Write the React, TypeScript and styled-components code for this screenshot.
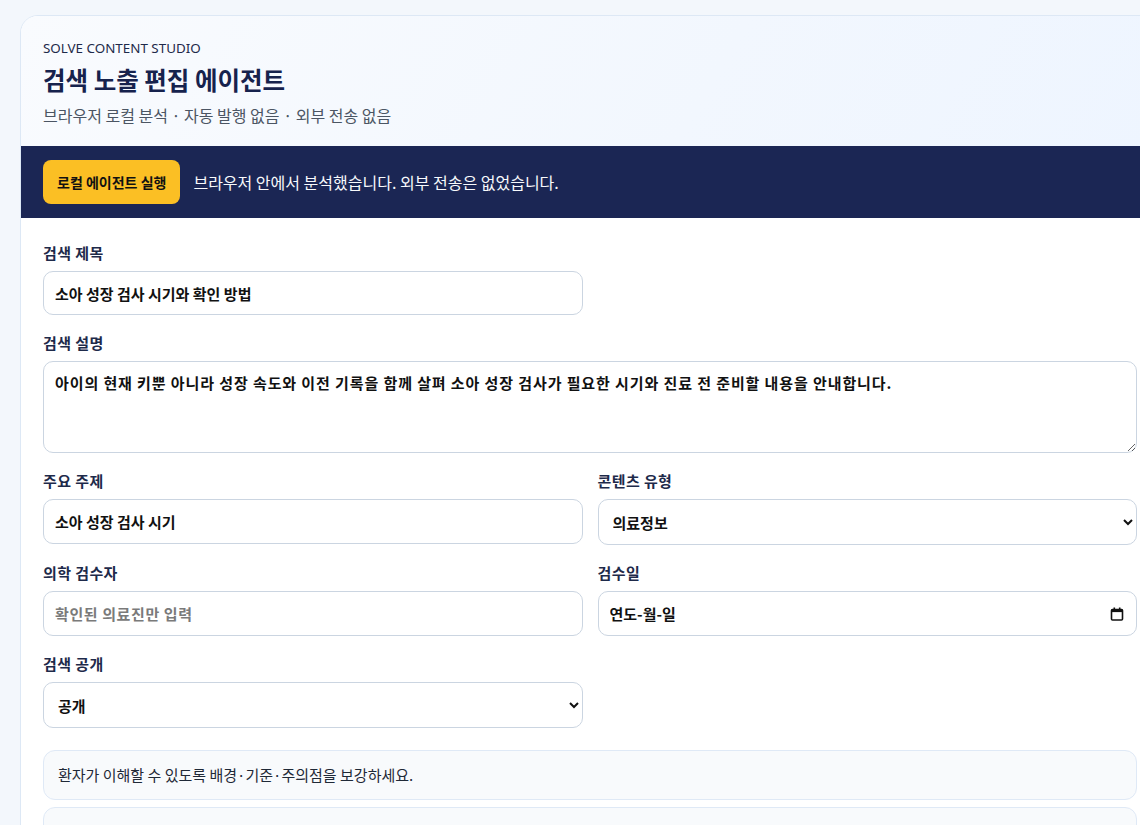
import styled, { createGlobalStyle } from 'styled-components';

const GlobalStyle = createGlobalStyle`
  html, body {
    margin: 0;
    overflow-x: hidden;
    background: #f3f7fc;
  }
  body {
    font-family: "Noto Sans", "Noto Sans CJK KR", sans-serif;
    color: #0f172a;
  }
  * { box-sizing: border-box; }
`;

const Page = styled.div`
  padding: 15px 0 0 20px;
`;

const Card = styled.section`
  width: 1140px;
  background: #ffffff;
  border: 1px solid #dde8f5;
  border-radius: 18px;
  overflow: hidden;
`;

const Header = styled.header`
  padding: 23px 22px 20px;
  background: linear-gradient(120deg, #f9fbfe 0%, #f2f7fe 60%, #eef5ff 100%);
`;

const Eyebrow = styled.div`
  font-size: 13.4px;
  line-height: 18px;
  color: #1e2a4a;
`;

const Title = styled.h1`
  margin: 7px 0 0;
  font-size: 24.5px;
  line-height: 32px;
  font-weight: 700;
  color: #16224d;
  font-family: "Noto Sans CJK KR", "Noto Sans", sans-serif;
`;

const Subtitle = styled.p`
  margin: 8px 0 0;
  font-size: 16px;
  line-height: 22px;
  color: #4b5563;
  font-family: "Noto Sans CJK KR", sans-serif;
`;

const RunBar = styled.div`
  display: flex;
  align-items: center;
  gap: 13px;
  padding: 14px 22px;
  background: #1b2654;
`;

const RunButton = styled.button`
  height: 44px;
  padding: 0 14px;
  border: none;
  border-radius: 8px;
  background: #fbbf24;
  color: #111111;
  font-family: "Noto Sans CJK KR", sans-serif;
  font-size: 14px;
  font-weight: 700;
  cursor: pointer;
`;

const RunMessage = styled.span`
  color: #f8fafc;
  font-size: 16px;
  font-family: "Noto Sans CJK KR", sans-serif;
`;

const Form = styled.div`
  display: flex;
  flex-direction: column;
  gap: 18px;
  padding: 25px 22px 30px;
`;

const Row = styled.div`
  display: grid;
  grid-template-columns: 1fr 1fr;
  column-gap: 15px;
`;

const Field = styled.label`
  display: flex;
  flex-direction: column;
  gap: 8px;
`;

const Label = styled.span`
  font-size: 15px;
  line-height: 20px;
  font-weight: 700;
  letter-spacing: 0.4px;
  color: #1e2a4a;
  font-family: "Noto Sans CJK KR", sans-serif;
`;

const controlBase = `
  width: 100%;
  border: 1px solid #cbd5e1;
  border-radius: 10px;
  background: #ffffff;
  font-family: "Noto Sans CJK KR", sans-serif;
  font-size: 15px;
  font-weight: 700;
  color: #111111;
  outline: none;
`;

const TextInput = styled.input<{ $half?: boolean }>`
  ${controlBase}
  height: ${({ $half }) => ($half ? '45px' : '44px')};
  padding: 0 11px;
  &::placeholder {
    color: #7a7a7a;
    letter-spacing: 0.6px;
  }
`;

const TextArea = styled.textarea`
  ${controlBase}
  height: 92px;
  padding: 10px 11px;
  line-height: 22px;
  letter-spacing: 0.9px;
  resize: vertical;
`;

const Select = styled.select`
  ${controlBase}
  height: 46px;
  padding: 0 10px;
`;

const DateBox = styled.div`
  ${controlBase}
  height: 45px;
  display: flex;
  align-items: center;
  padding: 0 12px 0 11px;
`;

const DateText = styled.input`
  flex: 1;
  border: none;
  outline: none;
  background: transparent;
  font: inherit;
  color: #111111;
  padding: 0;
`;

const NoteStack = styled.div`
  display: flex;
  flex-direction: column;
  gap: 7px;
  margin-top: 4px;
`;

const Note = styled.div<{ $spacious?: boolean }>`
  padding: ${({ $spacious }) => ($spacious ? '32px 14px 16px' : '13px 14px')};
  border: 1px solid #dfe9f6;
  border-radius: 12px;
  background: #f8fafc;
  font-size: 15px;
  line-height: 22px;
  color: #1f2937;
  font-family: "Noto Sans CJK KR", sans-serif;
`;

function CalendarIcon() {
  return (
    <svg width="14" height="14" viewBox="0 0 14 14" fill="none">
      <rect x="1.5" y="2.5" width="11" height="10.5" rx="1" stroke="#111" strokeWidth="1.6" />
      <rect x="1.5" y="2.5" width="11" height="2.6" fill="#111" />
      <rect x="3.5" y="0.5" width="1.6" height="2.5" fill="#111" />
      <rect x="8.9" y="0.5" width="1.6" height="2.5" fill="#111" />
    </svg>
  );
}

export default function App() {
  return (
    <>
      <GlobalStyle />
      <Page>
        <Card>
          <Header>
            <Eyebrow>SOLVE CONTENT STUDIO</Eyebrow>
            <Title>검색 노출 편집 에이전트</Title>
            <Subtitle>브라우저 로컬 분석 · 자동 발행 없음 · 외부 전송 없음</Subtitle>
          </Header>

          <RunBar>
            <RunButton type="button">로컬 에이전트 실행</RunButton>
            <RunMessage>브라우저 안에서 분석했습니다. 외부 전송은 없었습니다.</RunMessage>
          </RunBar>

          <Form>
            <Row>
              <Field>
                <Label>검색 제목</Label>
                <TextInput defaultValue="소아 성장 검사 시기와 확인 방법" />
              </Field>
            </Row>

            <Field>
              <Label>검색 설명</Label>
              <TextArea defaultValue="아이의 현재 키뿐 아니라 성장 속도와 이전 기록을 함께 살펴 소아 성장 검사가 필요한 시기와 진료 전 준비할 내용을 안내합니다." />
            </Field>

            <Row>
              <Field>
                <Label>주요 주제</Label>
                <TextInput $half defaultValue="소아 성장 검사 시기" />
              </Field>
              <Field>
                <Label>콘텐츠 유형</Label>
                <Select defaultValue="의료정보">
                  <option>의료정보</option>
                  <option>병원소식</option>
                  <option>칼럼</option>
                </Select>
              </Field>
            </Row>

            <Row>
              <Field>
                <Label>의학 검수자</Label>
                <TextInput $half placeholder="확인된 의료진만 입력" />
              </Field>
              <Field>
                <Label>검수일</Label>
                <DateBox>
                  <DateText readOnly value="연도-월-일" />
                  <CalendarIcon />
                </DateBox>
              </Field>
            </Row>

            <Row>
              <Field>
                <Label>검색 공개</Label>
                <Select defaultValue="공개">
                  <option>공개</option>
                  <option>비공개</option>
                </Select>
              </Field>
            </Row>

            <NoteStack>
              <Note>환자가 이해할 수 있도록 배경·기준·주의점을 보강하세요.</Note>
              <Note $spacious>검색 설명은 80~160자 사이로 유지하면 노출에 유리합니다.</Note>
            </NoteStack>
          </Form>
        </Card>
      </Page>
    </>
  );
}
